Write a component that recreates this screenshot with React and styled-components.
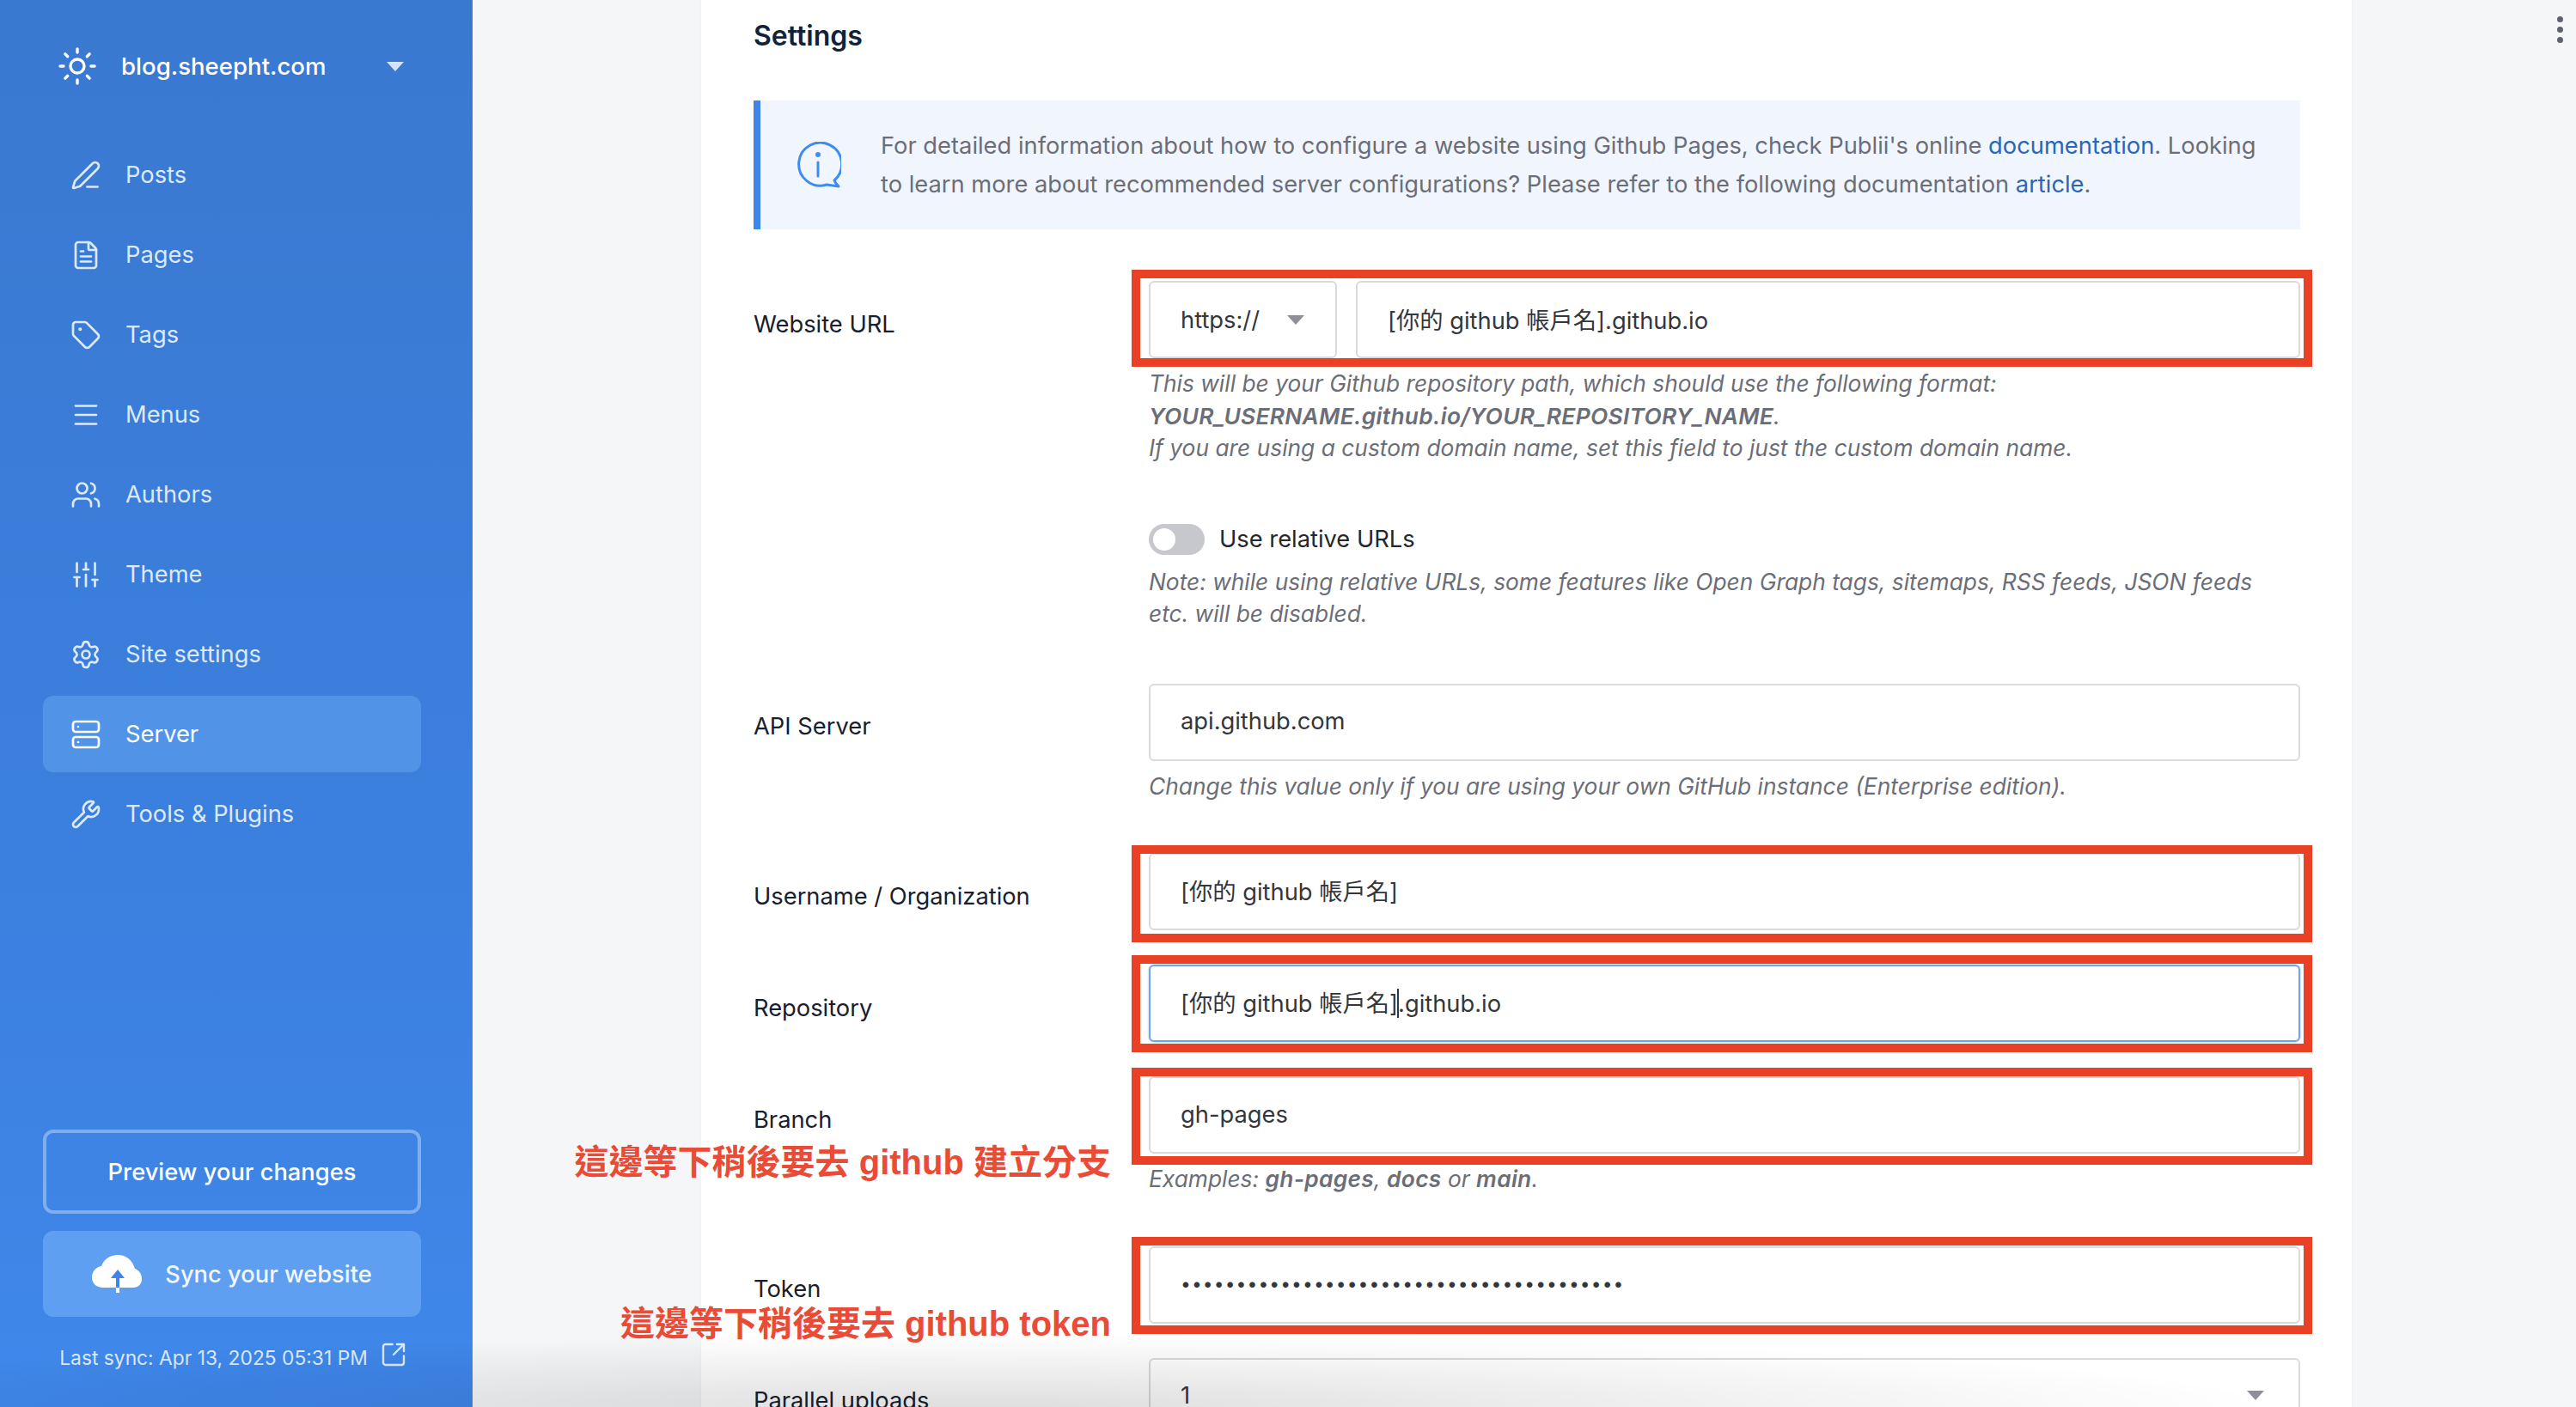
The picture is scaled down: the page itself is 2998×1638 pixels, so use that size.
import React from 'react';
import styled, { createGlobalStyle } from 'styled-components';
import { Sun, PenLine, FileText, Tag, Menu, Users, SlidersVertical, Settings, Server, Wrench, SquareArrowOutUpRight } from 'lucide-react';

const GlobalStyle = createGlobalStyle`
  html, body {
    margin: 0;
    padding: 0;
    overflow: hidden;
    background: #f5f6f8;
  }
  * {
    box-sizing: border-box;
  }
`;

const Page = styled.div`
  position: relative;
  display: flex;
  width: 2998px;
  height: 1638px;
  overflow: hidden;
  font-family: Inter, "Noto Sans CJK TC", sans-serif;
  font-size: 27.3px;
  color: #17202e;
`;

const Shade = styled.div`
  position: absolute;
  inset: 0;
  pointer-events: none;
  z-index: 5;
  background: radial-gradient(ellipse 1500px 85px at 1150px 100%, rgba(0, 0, 0, 0.13), rgba(0, 0, 0, 0));
`;

const Sidebar = styled.aside`
  flex: 0 0 550px;
  display: flex;
  flex-direction: column;
  padding: 54px 60px 44px 50px;
  background: linear-gradient(180deg, #3a79d0 0%, #3b7edc 50%, #3f87ea 100%);
`;

const SiteSwitch = styled.div`
  display: flex;
  align-items: center;
  gap: 27px;
  height: 46px;
  padding: 0 20px 0 16px;
  color: #fff;
  font-size: 27.6px;
  font-weight: 500;
`;

const SwitchArrow = styled.span`
  margin-left: auto;
  border-left: 10px solid transparent;
  border-right: 10px solid transparent;
  border-top: 11px solid #d6e4fa;
`;

const Nav = styled.nav`
  display: flex;
  flex-direction: column;
  gap: 4px;
  margin-top: 59px;
`;

const NavItem = styled.a`
  display: flex;
  align-items: center;
  gap: 28px;
  height: 89px;
  padding-left: 32px;
  border-radius: 12px;
  color: ${(p) => (p.$active ? '#ffffff' : '#dce9fb')};
  background: ${(p) => (p.$active ? '#5193e6' : 'transparent')};
`;

const SideFooter = styled.div`
  margin-top: auto;
  display: flex;
  flex-direction: column;
  gap: 20px;
`;

const PreviewButton = styled.div`
  display: flex;
  align-items: center;
  justify-content: center;
  height: 98px;
  border: 4px solid #80aeee;
  border-radius: 12px;
  color: #fff;
  font-weight: 500;
`;

const SyncButton = styled.div`
  display: flex;
  align-items: center;
  justify-content: center;
  gap: 27px;
  height: 100px;
  border-radius: 12px;
  background: #5e9ff1;
  color: #f2f7ff;
  font-weight: 500;
`;

const LastSync = styled.div`
  display: flex;
  align-items: center;
  justify-content: center;
  gap: 14px;
  margin-top: 14px;
  padding-left: 3px;
  color: #dce9fb;
  font-size: 22.8px;
`;

const SyncIcon = styled(SquareArrowOutUpRight)`
  margin-top: -8px;
`;

const Main = styled.main`
  position: relative;
  flex: 1;
  padding-left: 266px;
  background: #f5f6f8;
`;

const Dots = styled.div`
  position: absolute;
  top: 19px;
  right: 15px;
  display: flex;
  flex-direction: column;
  gap: 5px;
`;

const Dot = styled.span`
  width: 7px;
  height: 7px;
  border-radius: 50%;
  background: #5e626c;
`;

const Card = styled.section`
  width: 1921px;
  height: 1638px;
  padding: 20px 60px 0 61px;
  background: #fff;
  box-shadow: 0 0 3px rgba(0, 0, 0, 0.04);
`;

const Heading = styled.h2`
  margin: 0;
  font-size: 32px;
  line-height: 44px;
  font-weight: 600;
  color: #10233a;
`;

const InfoBox = styled.div`
  display: flex;
  align-items: center;
  gap: 46px;
  height: 150px;
  margin: 53px 0 60px;
  padding-left: 40px;
  border-left: 8px solid #3f86ea;
  background: #f1f6fe;
  color: #6b6e78;
  line-height: 45px;
`;

const InfoLink = styled.a`
  color: #2a66b8;
`;

const Field = styled.div`
  display: grid;
  grid-template-columns: 460px 1340px;
  align-items: center;
  margin-top: ${(p) => p.$top || 0}px;
  margin-bottom: 40px;
`;

const Label = styled.label`
  padding-top: 10px;
`;

const Control = styled.div`
  position: relative;
  display: flex;
  gap: 22px;
  height: 90px;
`;

const Box = styled.div`
  flex: 1;
  display: flex;
  align-items: center;
  justify-content: space-between;
  padding: 0 40px ${(p) => (p.$lift ? 5 : 2)}px 35px;
  border: 2px solid ${(p) => (p.$focus ? '#6ea4ee' : '#d9d9de')};
  border-radius: 6px;
  background: #fff;
  color: #33363c;
  box-shadow: ${(p) => (p.$focus ? '0 0 3px #a9c9f5' : 'none')};
`;

const SmallBox = styled(Box)`
  flex: 0 0 219px;
  padding-right: 36px;
  padding-bottom: 0;
`;

const SelectArrow = styled.span`
  border-left: 10px solid transparent;
  border-right: 10px solid transparent;
  border-top: 11px solid #8e8f9b;
`;

const Caret = styled.span`
  display: inline-block;
  width: 2px;
  height: 34px;
  margin: 0 -1px -7px;
  background: #33363c;
`;

const Secret = styled.span`
  font-size: 21px;
  letter-spacing: 1.1px;
`;

const Mark = styled.div`
  position: absolute;
  top: ${(p) => p.$top}px;
  bottom: ${(p) => p.$bottom}px;
  left: -20px;
  right: -14px;
  border: 10px solid #ea4025;
  pointer-events: none;
`;

const Note = styled.div`
  position: absolute;
  top: ${(p) => p.$top}px;
  right: calc(100% + 44px);
  z-index: 3;
  white-space: nowrap;
  color: #ea4b36;
  font-family: "Liberation Sans", "Noto Sans CJK TC", sans-serif;
  font-size: 40px;
  line-height: 52px;
  font-weight: 700;
`;

const Help = styled.div`
  grid-column: 2;
  margin: ${(p) => p.$top || 11}px 0 ${(p) => p.$bottom || 19}px;
  color: #6b6e78;
  font-size: 26.35px;
  line-height: 37.5px;
  font-style: italic;

  strong {
    font-weight: 600;
    letter-spacing: 0.3px;
  }
`;

const SwitchRow = styled.div`
  grid-column: 2;
  display: flex;
  align-items: center;
  gap: 17px;
  height: 36px;
  color: #24272d;
`;

const Switch = styled.span`
  position: relative;
  width: 65px;
  height: 36px;
  border-radius: 18px;
  background: #c6c8ce;
`;

const Knob = styled.span`
  position: absolute;
  top: 5px;
  left: 5px;
  width: 26px;
  height: 26px;
  border-radius: 50%;
  background: #fff;
`;

const navItems = [
  { label: 'Posts', icon: PenLine },
  { label: 'Pages', icon: FileText },
  { label: 'Tags', icon: Tag },
  { label: 'Menus', icon: Menu },
  { label: 'Authors', icon: Users },
  { label: 'Theme', icon: SlidersVertical },
  { label: 'Site settings', icon: Settings },
  { label: 'Server', icon: Server, active: true },
  { label: 'Tools & Plugins', icon: Wrench },
];

const CloudIcon = () => (
  <svg width="58" height="44" viewBox="0 0 58 44">
    <path
      fill="#fff"
      d="M13 38C5 38 0 33 0 26c0-7 5-12 11-13C14 5 21 0 30 0c10 0 17 6 20 16 5 2 8 6 8 12 0 6-4 10-10 10Z"
    />
    <path fill="#3f84e6" d="M30 17l8 10h-6v11h-4V27h-6Z" />
    <rect fill="#fff" x="28" y="38" width="4" height="6" />
  </svg>
);

const InfoIcon = () => (
  <svg width="54" height="54" viewBox="0 0 54 54" fill="none" stroke="#3f8cf0" strokeWidth="3" strokeLinecap="round" strokeLinejoin="round">
    <path d="M46 45A25 25 0 1 0 37 50L51 52C49 50 47 48 46 45Z" />
    <path d="M27 24V40" />
    <circle cx="27" cy="15" r="1.5" fill="#3f8cf0" />
  </svg>
);

const App = () => {
  return (
    <Page>
      <GlobalStyle />
      <Sidebar>
        <SiteSwitch>
          <Sun size={48} strokeWidth={1.7} />
          blog.sheepht.com
          <SwitchArrow />
        </SiteSwitch>
        <Nav>
          {navItems.map((item) => (
            <NavItem key={item.label} $active={item.active}>
              <item.icon size={36} strokeWidth={1.8} />
              {item.label}
            </NavItem>
          ))}
        </Nav>
        <SideFooter>
          <PreviewButton>Preview your changes</PreviewButton>
          <SyncButton>
            <CloudIcon />
            Sync your website
          </SyncButton>
          <LastSync>
            Last sync: Apr 13, 2025 05:31 PM
            <SyncIcon size={32} strokeWidth={1.8} />
          </LastSync>
        </SideFooter>
      </Sidebar>
      <Main>
        <Card>
          <Heading>Settings</Heading>
          <InfoBox>
            <InfoIcon />
            <div>
              For detailed information about how to configure a website using Github Pages, check Publii's online{' '}
              <InfoLink>documentation</InfoLink>. Looking
              <br />
              to learn more about recommended server configurations? Please refer to the following documentation{' '}
              <InfoLink>article</InfoLink>.
            </div>
          </InfoBox>

          <Field>
            <Label>Website URL</Label>
            <Control>
              <SmallBox>
                https://
                <SelectArrow />
              </SmallBox>
              <Box>[你的 github 帳戶名].github.io</Box>
              <Mark $top={-13} $bottom={-10} />
            </Control>
            <Help>
              This will be your Github repository path, which should use the following format:
              <br />
              <strong>YOUR_USERNAME.github.io/YOUR_REPOSITORY_NAME</strong>.
              <br />
              If you are using a custom domain name, set this field to just the custom domain name.
            </Help>
          </Field>

          <Field $top={50}>
            <SwitchRow>
              <Switch>
                <Knob />
              </Switch>
              Use relative URLs
            </SwitchRow>
            <Help $top={13} $bottom={22}>
              Note: while using relative URLs, some features like Open Graph tags, sitemaps, RSS feeds, JSON feeds
              <br />
              etc. will be disabled.
            </Help>
          </Field>

          <Field>
            <Label>API Server</Label>
            <Control>
              <Box>api.github.com</Box>
            </Control>
            <Help>Change this value only if you are using your own GitHub instance (Enterprise edition).</Help>
          </Field>

          <Field>
            <Label>Username / Organization</Label>
            <Control>
              <Box $lift>[你的 github 帳戶名]</Box>
              <Mark $top={-9} $bottom={-14} />
            </Control>
          </Field>

          <Field>
            <Label>Repository</Label>
            <Control>
              <Box $focus $lift>
                <span>
                  [你的 github 帳戶名]
                  <Caret />
                  .github.io
                </span>
              </Box>
              <Mark $top={-11} $bottom={-12} />
            </Control>
          </Field>

          <Field>
            <Label>Branch</Label>
            <Control>
              <Box>gh-pages</Box>
              <Mark $top={-10} $bottom={-13} />
              <Note $top={74}>這邊等下稍後要去 github 建立分支</Note>
            </Control>
            <Help>
              Examples: <strong>gh-pages</strong>, <strong>docs</strong> or <strong>main</strong>.
            </Help>
          </Field>

          <Field>
            <Label>Token</Label>
            <Control>
              <Box>
                <Secret>{'•'.repeat(40)}</Secret>
              </Box>
              <Mark $top={-11} $bottom={-12} />
              <Note $top={64}>這邊等下稍後要去 github token</Note>
            </Control>
          </Field>

          <Field>
            <Label>Parallel uploads</Label>
            <Control>
              <Box>
                1
                <SelectArrow />
              </Box>
            </Control>
          </Field>
        </Card>
        <Dots>
          <Dot />
          <Dot />
          <Dot />
        </Dots>
      </Main>
      <Shade />
    </Page>
  );
};

export default App;
